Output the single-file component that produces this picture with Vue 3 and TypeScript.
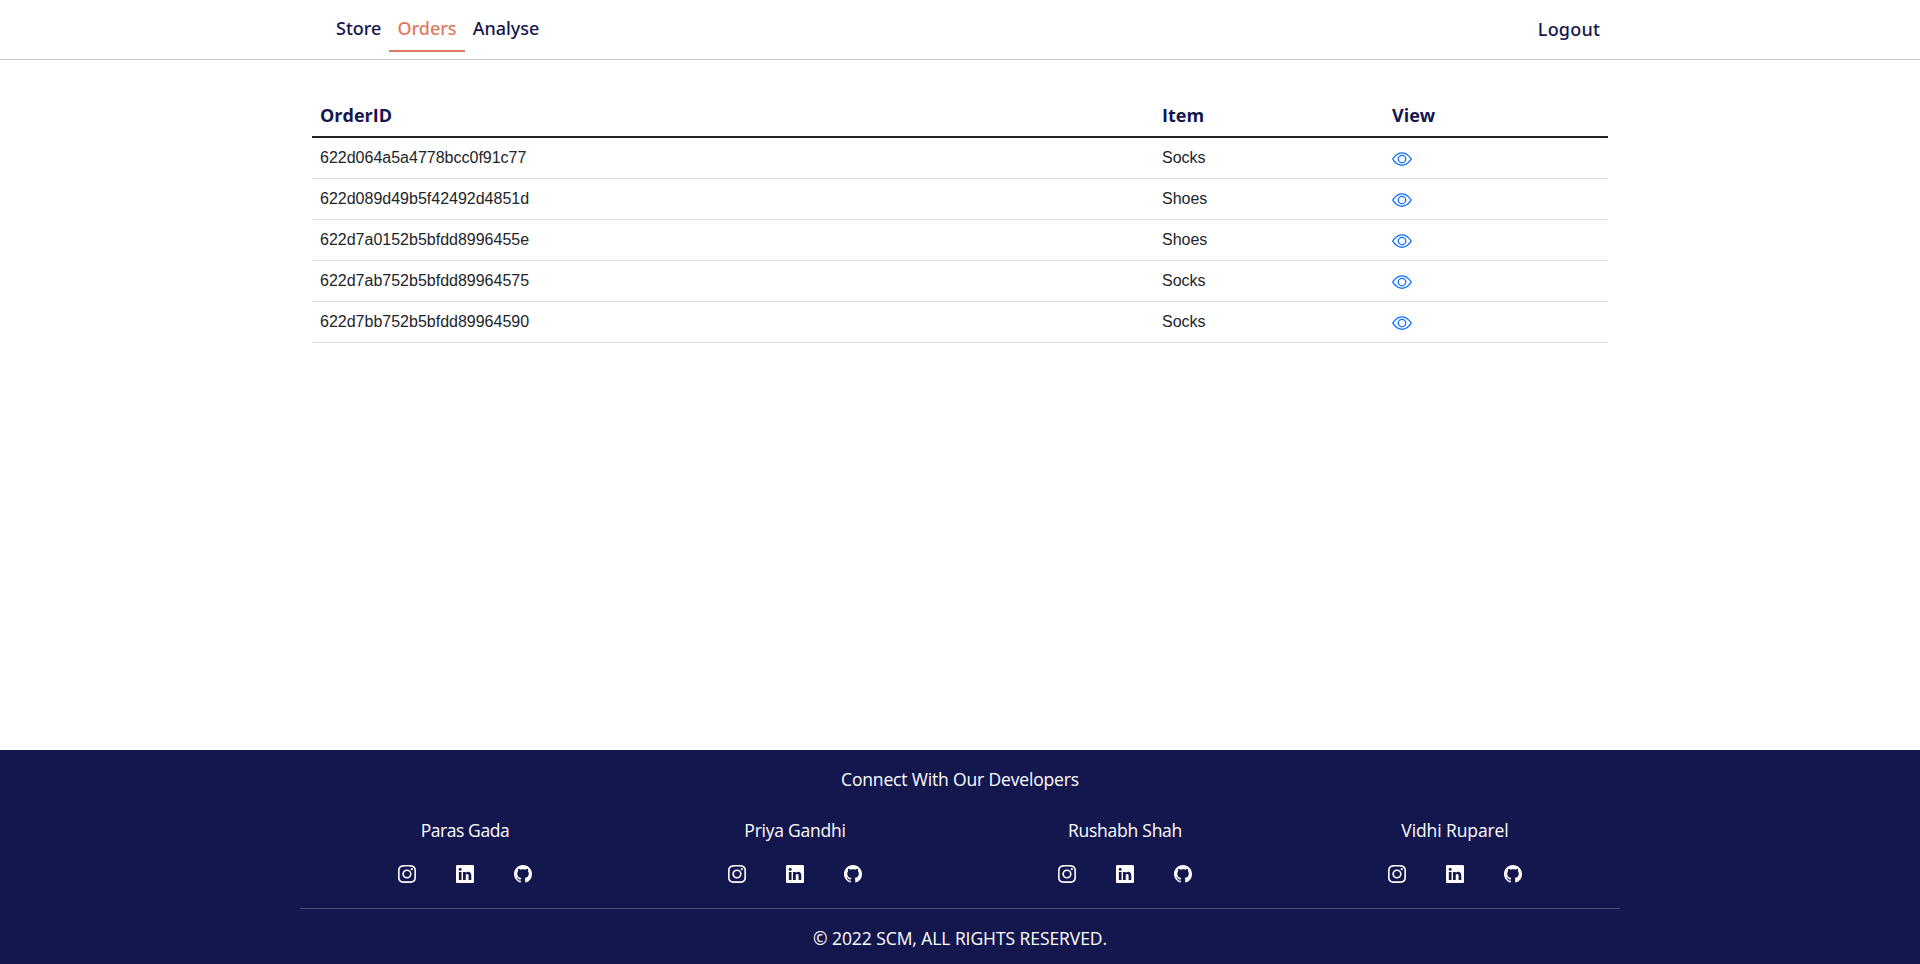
<script setup lang="ts">
interface Order {
  id: string
  item: string
}

const navItems: string[] = ['Store', 'Orders', 'Analyse']
const activeItem = 'Orders'

const orders: Order[] = [
  { id: '622d064a5a4778bcc0f91c77', item: 'Socks' },
  { id: '622d089d49b5f42492d4851d', item: 'Shoes' },
  { id: '622d7a0152b5bfdd8996455e', item: 'Shoes' },
  { id: '622d7ab752b5bfdd89964575', item: 'Socks' },
  { id: '622d7bb752b5bfdd89964590', item: 'Socks' },
]

const developers: string[] = ['Paras Gada', 'Priya Gandhi', 'Rushabh Shah', 'Vidhi Ruparel']
</script>

<template>
  <div class="page">
    <header class="topbar">
      <nav class="nav">
        <a v-for="item in navItems" :key="item" class="nav-link" :class="{ active: item === activeItem }">{{ item }}</a>
      </nav>
      <a class="logout">Logout</a>
    </header>

    <main class="content">
      <table class="orders">
        <thead>
          <tr><th class="col-id">OrderID</th><th class="col-item">Item</th><th class="col-view">View</th></tr>
        </thead>
        <tbody>
          <tr v-for="order in orders" :key="order.id">
            <td>{{ order.id }}</td>
            <td>{{ order.item }}</td>
            <td>
              <svg class="eye" viewBox="0 0 16 16" fill="currentColor">
                <path d="M16 8s-3-5.5-8-5.5S0 8 0 8s3 5.5 8 5.5S16 8 16 8zM1.173 8a13.133 13.133 0 0 1 1.66-2.043C4.12 4.668 5.88 3.5 8 3.5c2.12 0 3.879 1.168 5.168 2.457A13.133 13.133 0 0 1 14.828 8c-.058.087-.122.183-.195.288-.335.48-.83 1.12-1.465 1.755C11.879 11.332 10.119 12.5 8 12.5c-2.12 0-3.879-1.168-5.168-2.457A13.134 13.134 0 0 1 1.172 8z" />
                <path d="M8 5.5a2.5 2.5 0 1 0 0 5 2.5 2.5 0 0 0 0-5zM4.5 8a3.5 3.5 0 1 1 7 0 3.5 3.5 0 0 1-7 0z" />
              </svg>
            </td>
          </tr>
        </tbody>
      </table>
    </main>

    <footer class="footer">
      <p class="connect">Connect With Our Developers</p>
      <div class="developers">
        <section v-for="name in developers" :key="name" class="developer">
          <p class="name">{{ name }}</p>
          <div class="links">
            <svg viewBox="0 0 16 16" fill="currentColor">
              <path d="M8 0C5.829 0 5.556.01 4.703.048 3.85.088 3.269.222 2.76.42a3.917 3.917 0 0 0-1.417.923A3.927 3.927 0 0 0 .42 2.76C.222 3.268.087 3.85.048 4.7.01 5.555 0 5.827 0 8.001c0 2.172.01 2.444.048 3.297.04.852.174 1.433.372 1.942.205.526.478.972.923 1.417.444.445.89.719 1.416.923.51.198 1.09.333 1.942.372C5.555 15.99 5.827 16 8 16s2.444-.01 3.298-.048c.851-.04 1.434-.174 1.943-.372a3.916 3.916 0 0 0 1.416-.923c.445-.445.718-.891.923-1.417.197-.509.332-1.09.372-1.942C15.99 10.445 16 10.173 16 8s-.01-2.445-.048-3.299c-.04-.851-.175-1.433-.372-1.941a3.926 3.926 0 0 0-.923-1.417A3.911 3.911 0 0 0 13.24.42c-.51-.198-1.092-.333-1.943-.372C10.443.01 10.172 0 7.998 0h.003zm-.717 1.442h.718c2.136 0 2.389.007 3.232.046.78.035 1.204.166 1.486.275.373.145.64.319.92.599.28.28.453.546.598.92.11.281.24.705.275 1.485.039.843.047 1.096.047 3.231s-.008 2.389-.047 3.232c-.035.78-.166 1.203-.275 1.485a2.47 2.47 0 0 1-.599.919c-.28.28-.546.453-.92.598-.28.11-.704.24-1.485.276-.843.038-1.096.047-3.232.047s-2.39-.009-3.233-.047c-.78-.036-1.203-.166-1.485-.276a2.478 2.478 0 0 1-.92-.598 2.48 2.48 0 0 1-.6-.92c-.109-.281-.24-.705-.275-1.485-.038-.843-.046-1.096-.046-3.233 0-2.136.008-2.388.046-3.231.036-.78.166-1.204.276-1.486.145-.373.319-.64.599-.92.28-.28.546-.453.92-.598.282-.11.705-.24 1.485-.276.738-.034 1.024-.044 2.515-.045v.002zm4.988 1.328a.96.96 0 1 0 0 1.92.96.96 0 0 0 0-1.92zm-4.27 1.122a4.109 4.109 0 1 0 0 8.217 4.109 4.109 0 0 0 0-8.217zm0 1.441a2.667 2.667 0 1 1 0 5.334 2.667 2.667 0 0 1 0-5.334z" />
            </svg>
            <svg viewBox="0 0 16 16" fill="currentColor">
              <path d="M0 1.146C0 .513.526 0 1.175 0h13.65C15.474 0 16 .513 16 1.146v13.708c0 .633-.526 1.146-1.175 1.146H1.175C.526 16 0 15.487 0 14.854V1.146zm4.943 12.248V6.169H2.542v7.225h2.401zm-1.2-8.212c.837 0 1.358-.554 1.358-1.248-.015-.709-.52-1.248-1.342-1.248-.822 0-1.359.54-1.359 1.248 0 .694.521 1.248 1.327 1.248h.016zm4.908 8.212V9.359c0-.216.016-.432.08-.586.173-.431.568-.878 1.232-.878.869 0 1.216.662 1.216 1.634v3.865h2.401V9.25c0-2.22-1.184-3.252-2.764-3.252-1.274 0-1.845.7-2.165 1.193v.025h-.016a5.54 5.54 0 0 1 .016-.025V6.169h-2.4c.03.678 0 7.225 0 7.225h2.4z" />
            </svg>
            <svg viewBox="0 0 16 16" fill="currentColor">
              <path d="M8 0C3.58 0 0 3.58 0 8c0 3.54 2.29 6.53 5.47 7.59.4.07.55-.17.55-.38 0-.19-.01-.82-.01-1.49-2.01.37-2.53-.49-2.69-.94-.09-.23-.48-.94-.82-1.13-.28-.15-.68-.52-.01-.53.63-.01 1.08.58 1.23.82.72 1.21 1.87.87 2.33.66.07-.52.28-.87.51-1.07-1.78-.2-3.64-.89-3.64-3.95 0-.87.31-1.59.82-2.15-.08-.2-.36-1.02.08-2.12 0 0 .67-.21 2.2.82.64-.18 1.32-.27 2-.27.68 0 1.36.09 2 .27 1.53-1.04 2.2-.82 2.2-.82.44 1.1.16 1.92.08 2.12.51.56.82 1.27.82 2.15 0 3.07-1.87 3.75-3.65 3.95.29.25.54.73.54 1.48 0 1.07-.01 1.93-.01 2.2 0 .21.15.46.55.38A8.012 8.012 0 0 0 16 8c0-4.42-3.58-8-8-8z" />
            </svg>
          </div>
        </section>
      </div>
      <p class="copyright">© 2022 SCM, ALL RIGHTS RESERVED.</p>
    </footer>
  </div>
</template>

<style scoped>
.page {
  display: flex;
  flex-direction: column;
  height: 964px;
  overflow: hidden;
  background: #fff;
  color: #212529;
  font-family: "Open Sans", sans-serif;
}
p { margin: 0; }
.topbar {
  box-sizing: border-box;
  display: flex;
  align-items: flex-start;
  justify-content: space-between;
  height: 60px;
  padding: 0 320px 0 328px;
  border-bottom: 1px solid #c8c8ca;
  color: #14174e;
  font: 500 18px/26px "Noto Sans", sans-serif;
}
.nav { display: flex; }
.nav-link { padding: 15px 8px 9px; border-bottom: 2px solid transparent; }
.nav-link.active { color: #e07a5f; border-color: #e07a5f; }
.logout { padding-top: 16px; letter-spacing: 0.2px; }
.content { flex: 1; padding: 37px 312px 0; }
.orders {
  width: 1296px;
  border-collapse: separate;
  border-spacing: 0;
  table-layout: fixed;
  font: 16px/24px "Liberation Sans", Arial, sans-serif;
}
th, td { padding: 8px; text-align: left; vertical-align: top; }
th {
  padding: 7px 8px 9px;
  height: 23px;
  border-bottom: 2px solid #212529;
  color: #14174e;
  font: 700 18px/23px "Open Sans", sans-serif;
}
td { border-bottom: 1px solid #dee2e6; }
.col-id { width: 826px; }
.col-item { width: 214px; }
.eye { display: block; width: 20px; height: 20px; margin-top: 3px; color: #0d6efd; }
.footer {
  box-sizing: border-box;
  height: 214px;
  padding: 16px 300px 0;
  background: #14174e;
  color: #fff;
  font-size: 17.5px;
  line-height: 27px;
  text-align: center;
}
.connect { letter-spacing: -0.16px; }
.developers {
  display: grid;
  grid-template-columns: repeat(4, 1fr);
  height: 91px;
  padding-top: 24px;
  border-bottom: 1px solid #4f5179;
}
.name { letter-spacing: -0.24px; }
.developer:first-child .name { letter-spacing: -0.44px; }
.developer:last-child .name { letter-spacing: -0.1px; }
.links { display: flex; justify-content: center; gap: 40px; margin-top: 21px; }
.links svg { width: 18px; height: 18px; }
.copyright { margin-top: 16px; letter-spacing: -0.07px; }
</style>
